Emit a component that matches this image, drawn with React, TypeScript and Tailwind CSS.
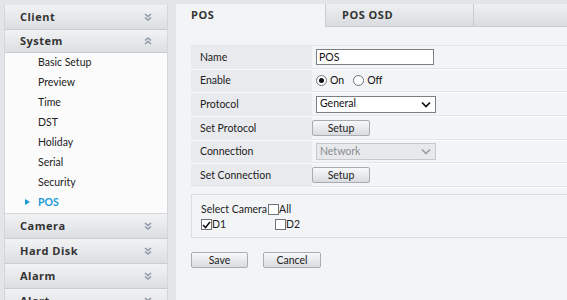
import { useState } from "react";

const font = { fontFamily: 'Lato, "Open Sans", sans-serif' };
const headFont = { fontFamily: '"Open Sans", "Noto Sans", sans-serif' };

function DoubleChevron({ up = false }: { up?: boolean }) {
	return (
		<svg
			width="8"
			height="8"
			viewBox="0 0 8 8"
			className={up ? "rotate-180" : ""}
			fill="none"
			stroke="#8d98a6"
			strokeWidth="1.5"
		>
			<path d="M1 1 L4 3.5 L7 1" />
			<path d="M1 4.5 L4 7 L7 4.5" />
		</svg>
	);
}

function GroupHeader({ title, open = false, h = "h-[25px]" }: { title: string; open?: boolean; h?: string }) {
	return (
		<div
			className={`${h} shrink-0 flex items-center justify-between pl-[15px] pr-[15px] bg-gradient-to-b from-[#f1f2f4] to-[#dcdfe2] border-b border-[#c9cdd2]`}
			style={headFont}
		>
			<span className="text-[11px] font-bold tracking-[0.5px] text-[#333]">{title}</span>
			<DoubleChevron up={open} />
		</div>
	);
}

const systemItems = [
	"Basic Setup",
	"Preview",
	"Time",
	"DST",
	"Holiday",
	"Serial",
	"Security",
	"POS",
];

function Sidebar() {
	return (
		<div className="w-[164px] shrink-0 flex flex-col border-x border-[#d3d6da]">
			<GroupHeader title="Client" />
			<GroupHeader title="System" open h="h-[23px]" />
			<div className="shrink-0 bg-[#fbfbfc] border-b border-[#d3d6da]">
				{systemItems.map((item) => {
					const active = item === "POS";
					return (
						<div key={item} className="h-[20px] flex items-center relative pl-[33px]">
							{active && (
								<span className="absolute left-[20px] top-[6px] w-0 h-0 border-y-[3.5px] border-y-transparent border-l-[5px] border-l-[#1a98d5]" />
							)}
							<span
								className={
									active
										? "text-[10.5px] font-bold text-[#1a98d5]"
										: "text-[10.5px] text-[#222]"
								}
							>
								{item}
							</span>
						</div>
					);
				})}
			</div>
			<GroupHeader title="Camera" />
			<GroupHeader title="Hard Disk" />
			<GroupHeader title="Alarm" />
			<GroupHeader title="Alert" />
		</div>
	);
}

function SetupButton({ label, w = "w-[58px]" }: { label: string; w?: string }) {
	return (
		<button
			className={`${w} h-[16px] text-[10.5px] leading-none text-[#222] rounded-[2px] border border-[#a9adb3] bg-gradient-to-b from-[#f7f8f9] to-[#d9dcdf]`}
		>
			{label}
		</button>
	);
}

function SelectBox({ value, disabled = false }: { value: string; disabled?: boolean }) {
	return (
		<div
			className={
				disabled
					? "ml-[4px] w-[120px] h-[17px] flex items-center justify-between pl-[3px] pr-[4px] border border-[#c6c8cb] bg-[#e8e9eb] text-[10.5px] text-[#8a8c8f]"
					: "ml-[4px] w-[120px] h-[17px] flex items-center justify-between pl-[3px] pr-[4px] border border-[#7d8084] bg-white text-[10.5px] text-[#111]"
			}
		>
			<span>{value}</span>
			<svg width="10" height="7" viewBox="0 0 10 7" fill="none" stroke={disabled ? "#9a9c9f" : "#111"} strokeWidth="1.7">
				<path d="M1 1.5 L5 5.5 L9 1.5" />
			</svg>
		</div>
	);
}

function Radio({ checked }: { checked: boolean }) {
	return (
		<span className="w-[11px] h-[11px] rounded-full border border-[#6f7378] bg-white flex items-center justify-center">
			{checked && <span className="w-[5px] h-[5px] rounded-full bg-[#111]" />}
		</span>
	);
}

function Check({ checked }: { checked: boolean }) {
	return (
		<span className="w-[11px] h-[11px] border border-[#6f7378] bg-white flex items-center justify-center">
			{checked && (
				<svg width="9" height="8" viewBox="0 0 9 8" fill="none" stroke="#111" strokeWidth="1.6">
					<path d="M1 4 L3.5 6.5 L8 1" />
				</svg>
			)}
		</span>
	);
}

function Row({ label, h = "h-[24px]", children }: { label: string; h?: string; children: React.ReactNode }) {
	return (
		<div className={`flex ${h} border-b border-[#fbfbfc]`}>
			<div className="w-[121px] bg-[#e9eaed] flex items-center pl-[9px] text-[10.5px] text-[#222]">
				{label}
			</div>
			<div className="flex-1 flex items-center border-b border-[#e4e5e8]">{children}</div>
		</div>
	);
}

export default function App() {
	const [enabled, setEnabled] = useState(true);

	return (
		<div className="w-[567px] h-[300px] overflow-hidden bg-[#e3e5e8] flex gap-[8px] pt-[5px] pl-[4px]" style={font}>
			<Sidebar />
			<div className="flex-1 bg-[#f3f4f6] flex flex-col -mt-[1px]">
				<div className="flex h-[23px] shrink-0" style={headFont}>
					<div className="w-[149px] flex items-center pl-[15px] text-[11px] font-bold tracking-[0.5px] text-[#333]">
						POS
					</div>
					<div className="w-[148px] flex items-center pl-[16px] text-[11px] font-bold tracking-[0.5px] text-[#333] bg-gradient-to-b from-[#eff0f2] to-[#d9dce0] border-l border-b border-[#c9cdd2]">
						POS OSD
					</div>
					<div className="flex-1 bg-gradient-to-b from-[#eff0f2] to-[#d9dce0] border-l border-b border-[#c9cdd2]" />
				</div>

				<div className="pl-[15px] pt-[18px] flex flex-col">
					<div className="border-t border-[#e4e5e8]">
						<Row label="Name">
							<div className="ml-[4px] w-[118px] h-[16px] border border-[#7d8084] bg-white text-[10.5px] leading-[14px] pl-[2px] text-[#111]">
								POS
							</div>
						</Row>
						<Row label="Enable" h="h-[23px]">
							<div className="flex items-center gap-[3px] text-[10.5px] text-[#111] pl-[4px]">
								<button onClick={() => setEnabled(true)} className="flex items-center gap-[3px]">
									<Radio checked={enabled} />
									<span>On</span>
								</button>
								<button onClick={() => setEnabled(false)} className="flex items-center gap-[3px] ml-[6px]">
									<Radio checked={!enabled} />
									<span>Off</span>
								</button>
							</div>
						</Row>
						<Row label="Protocol">
							<SelectBox value="General" />
						</Row>
						<Row label="Set Protocol">
							<SetupButton label="Setup" />
						</Row>
						<Row label="Connection" h="h-[23px]">
							<SelectBox value="Network" disabled />
						</Row>
						<Row label="Set Connection">
							<SetupButton label="Setup" />
						</Row>
					</div>

					<div className="mt-[6px] h-[44px] border-y border-l border-[#dcdee1] pl-[9px] pt-[7px] text-[10.5px] text-[#222]">
						<div className="flex items-center h-[15px]">
							<span>Select Camera</span>
							<span className="ml-[1px]">
								<Check checked={false} />
							</span>
							<span>All</span>
						</div>
						<div className="flex items-center h-[15px]">
							<span className="w-[74px] flex items-center">
								<Check checked />
								<span>D1</span>
							</span>
							<span className="flex items-center">
								<Check checked={false} />
								<span>D2</span>
							</span>
						</div>
					</div>

					<div className="flex gap-[15px] mt-[14px]">
						<SetupButton label="Save" w="w-[57px]" />
						<SetupButton label="Cancel" w="w-[58px]" />
					</div>
				</div>
			</div>
		</div>
	);
}
